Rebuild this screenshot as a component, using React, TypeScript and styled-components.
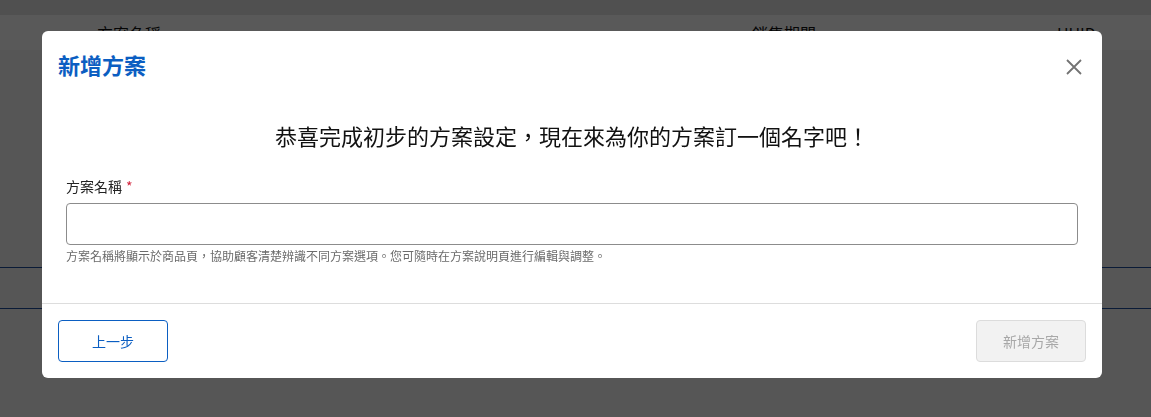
import styled, { createGlobalStyle } from 'styled-components';

const GlobalStyle = createGlobalStyle`
  html, body {
    margin: 0;
    padding: 0;
    background: #f7f7f7;
    font-family: "Noto Sans CJK TC", "Noto Sans", sans-serif;
  }
`;

const Page = styled.div`
  width: 100%;
  height: 417px;
  overflow: hidden;
  background: #f7f7f7;
`;

const TopStrip = styled.div`
  height: 15px;
  background: #e6e6e6;
`;

const HeadRow = styled.div`
  display: grid;
  grid-template-columns: 97px 655px 305px 1fr;
  height: 35px;
  align-items: center;
  background: #ffffff;
  font-size: 16px;
  color: #111;
`;

const Spacer = styled.div`
  height: 217px;
`;

const RowLine = styled.div`
  height: 1px;
  background: #1f4f9e;
  margin-bottom: 40px;
`;

const Overlay = styled.div`
  position: fixed;
  inset: 0;
  background: rgba(0, 0, 0, 0.65);
  display: flex;
  justify-content: flex-start;
  align-items: flex-start;
  padding: 31px 49px 0 42px;
`;

const Modal = styled.div`
  width: 1060px;
  background: #ffffff;
  border-radius: 6px;
  display: flex;
  flex-direction: column;
`;

const ModalHeader = styled.div`
  display: flex;
  justify-content: space-between;
  align-items: center;
  padding: 18px 20px 0 16px;
  height: 30px;
`;

const Title = styled.h2`
  margin: 0;
  font-size: 22px;
  line-height: 30px;
  font-weight: 700;
  color: #0b5ec2;
`;

const CloseButton = styled.button`
  border: none;
  background: none;
  padding: 0;
  margin-top: 6px;
  width: 16px;
  height: 16px;
  display: flex;
  cursor: pointer;
  color: #737373;
`;

const Body = styled.div`
  padding: 41px 24px 38px;
  display: flex;
  flex-direction: column;
`;

const Heading = styled.p`
  margin: 0 0 26px;
  text-align: center;
  font-size: 22px;
  line-height: 30px;
  color: #111;
`;

const Label = styled.label`
  font-size: 14px;
  line-height: 20px;
  color: #222;
  margin-bottom: 7px;
`;

const Required = styled.span`
  color: #d2233c;
  margin-left: 4px;
`;

const Input = styled.input`
  box-sizing: border-box;
  height: 42px;
  width: 100%;
  border: 1px solid #8c8c8c;
  border-radius: 4px;
  padding: 0 12px;
  font-size: 14px;
  font-family: inherit;
  outline: none;
`;

const Helper = styled.div`
  margin-top: 2px;
  font-size: 12px;
  line-height: 18px;
  color: #6b6b6b;
`;

const Footer = styled.div`
  border-top: 1px solid #dddddd;
  padding: 16px;
  display: flex;
  justify-content: space-between;
`;

const Button = styled.button<{ primary?: boolean }>`
  box-sizing: border-box;
  width: 110px;
  height: 42px;
  border-radius: 4px;
  font-size: 14px;
  font-family: inherit;
  cursor: pointer;
  border: 1px solid ${(p) => (p.primary ? '#dcdcdc' : '#0b5ec2')};
  background: ${(p) => (p.primary ? '#f2f2f2' : '#ffffff')};
  color: ${(p) => (p.primary ? '#a8a8a8' : '#0b5ec2')};
`;

const App = () => (
  <>
    <GlobalStyle />
    <Page>
      <TopStrip />
      <HeadRow>
        <span />
        <span>方案名稱</span>
        <span>銷售期間</span>
        <span>UUID</span>
      </HeadRow>
      <Spacer />
      <RowLine />
      <RowLine />
    </Page>
    <Overlay>
      <Modal>
        <ModalHeader>
          <Title>新增方案</Title>
          <CloseButton aria-label="close">
            <svg width="16" height="16" viewBox="0 0 16 16" fill="none" stroke="currentColor" strokeWidth="1.8">
              <path d="M1 1L15 15M15 1L1 15" />
            </svg>
          </CloseButton>
        </ModalHeader>
        <Body>
          <Heading>恭喜完成初步的方案設定，現在來為你的方案訂一個名字吧！</Heading>
          <Label>
            方案名稱<Required>*</Required>
          </Label>
          <Input />
          <Helper>方案名稱將顯示於商品頁，協助顧客清楚辨識不同方案選項。您可隨時在方案說明頁進行編輯與調整。</Helper>
        </Body>
        <Footer>
          <Button>上一步</Button>
          <Button primary disabled>
            新增方案
          </Button>
        </Footer>
      </Modal>
    </Overlay>
  </>
);

export default App;
